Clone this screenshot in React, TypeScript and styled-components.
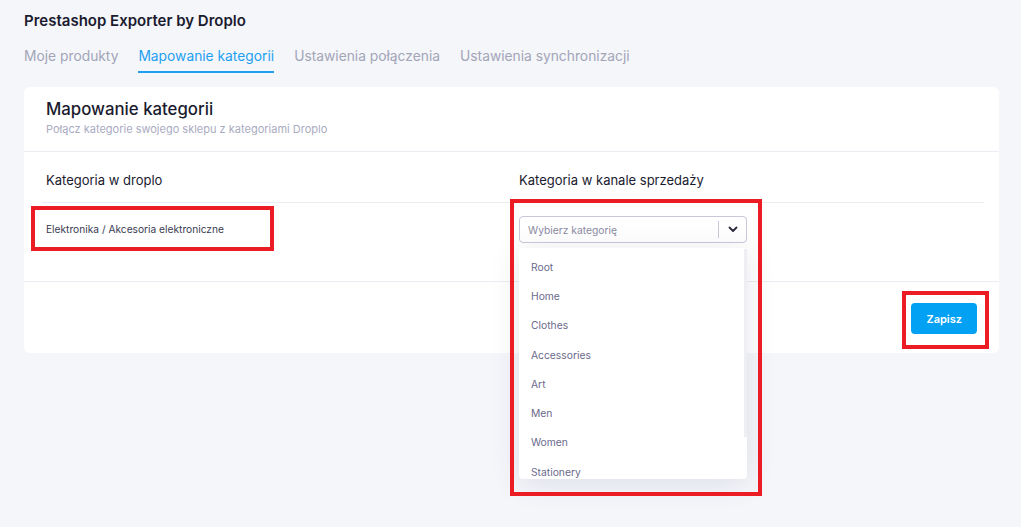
import * as React from "react";
import styled, { createGlobalStyle } from "styled-components";

const GlobalStyle = createGlobalStyle`
  html, body {
    margin: 0;
    padding: 0;
    background: #f4f6fa;
    font-family: "Inter", "Noto Sans", "Liberation Sans", sans-serif;
  }
  * {
    box-sizing: border-box;
  }
`;

const Page = styled.div`
  min-height: 527px;
  padding: 11px 22px 0 24px;
`;

const AppTitle = styled.h1`
  margin: 0;
  font-size: 15px;
  font-weight: 600;
  line-height: 20px;
  color: #1b1b2f;
`;

const Tabs = styled.nav`
  display: flex;
  gap: 20px;
  margin-top: 15px;
`;

const Tab = styled.div<{ $active?: boolean }>`
  padding-bottom: 5px;
  font-size: 13.8px;
  line-height: 20px;
  color: ${p => (p.$active ? "#1f9ff0" : "#a3a5b7")};
  border-bottom: 2px solid ${p => (p.$active ? "#1f9ff0" : "transparent")};
`;

const Card = styled.section`
  margin-top: 14px;
  background: #fff;
  border-radius: 6px;
`;

const CardHeader = styled.div`
  padding: 12px 22px 0;
  height: 65px;
  border-bottom: 1px solid #ececf2;
`;

const CardTitle = styled.h2`
  margin: 0;
  font-size: 16.8px;
  font-weight: 500;
  line-height: 20px;
  color: #1b1b2f;
`;

const CardSubtitle = styled.div`
  margin-top: 3px;
  font-size: 11px;
  line-height: 14px;
  color: #a9abbf;
`;

const Table = styled.div`
  padding: 0 15px 0 18px;
`;

const Row = styled.div<{ $head?: boolean }>`
  display: grid;
  grid-template-columns: 473px 1fr;
  height: ${p => (p.$head ? "51px" : "78px")};
  align-items: ${p => (p.$head ? "center" : "start")};
  border-bottom: ${p => (p.$head ? "1px solid #ececf2" : "none")};
`;

const HeadCell = styled.div`
  padding: 5px 4px 0;
  font-size: 13px;
  color: #1b1b2f;
`;

const Cell = styled.div`
  position: relative;
  padding: 19px 4px 0;
  font-size: 10.2px;
  line-height: 14px;
  color: #3a3a52;
`;

const SelectCell = styled.div`
  padding: 13px 4px 0;
`;

const SelectWrap = styled.div`
  position: relative;
  width: 228px;
`;

const SelectBox = styled.div`
  display: flex;
  align-items: center;
  height: 27px;
  border: 1px solid #c9c7d8;
  border-radius: 4px;
  background: #fff;
`;

const Placeholder = styled.span`
  flex: 1;
  padding-left: 8px;
  font-size: 10.3px;
  color: #8d8ca3;
`;

const Separator = styled.span`
  width: 1px;
  height: 17px;
  background: #c9c7d8;
`;

const Chevron = styled.span`
  display: flex;
  align-items: center;
  justify-content: center;
  width: 27px;
  color: #2a2a3a;
`;

const Menu = styled.div`
  position: absolute;
  top: 32px;
  left: 0;
  width: 228px;
  height: 231px;
  padding-top: 3px;
  overflow: hidden;
  background: #fff;
  border-radius: 4px;
  box-shadow: 0 4px 30px rgba(60, 60, 100, 0.12);
  z-index: 2;
`;

const ScrollThumb = styled.div`
  position: absolute;
  top: 1px;
  right: 0;
  width: 3px;
  height: 188px;
  background: #eeeef3;
`;

const MenuItem = styled.div`
  height: 29.3px;
  padding: 2px 12px 0;
  display: flex;
  align-items: center;
  font-size: 10.3px;
  color: #6b6a8c;
`;

const Footer = styled.div`
  display: flex;
  justify-content: flex-end;
  height: 72px;
  padding: 21px 22px 0;
  border-top: 1px solid #ececf2;
`;

const ButtonWrap = styled.div`
  position: relative;
`;

const SaveButton = styled.button`
  height: 31px;
  padding: 0 15px;
  border: none;
  border-radius: 4px;
  background: #03a1f4;
  color: #fff;
  font-family: inherit;
  font-size: 11px;
  font-weight: 600;
`;

const Highlight = styled.div<{ $t: number; $l: number; $w: number; $h: number }>`
  position: absolute;
  top: ${p => p.$t}px;
  left: ${p => p.$l}px;
  width: ${p => p.$w}px;
  height: ${p => p.$h}px;
  border: 4px solid #ec1c24;
  pointer-events: none;
  z-index: 5;
`;

const categories = ["Root", "Home", "Clothes", "Accessories", "Art", "Men", "Women", "Stationery"];

const App: React.FC = () => {
  return (
    <>
      <GlobalStyle />
      <Page>
        <AppTitle>Prestashop Exporter by Droplo</AppTitle>
        <Tabs>
          <Tab>Moje produkty</Tab>
          <Tab $active>Mapowanie kategorii</Tab>
          <Tab>Ustawienia połączenia</Tab>
          <Tab>Ustawienia synchronizacji</Tab>
        </Tabs>
        <Card>
          <CardHeader>
            <CardTitle>Mapowanie kategorii</CardTitle>
            <CardSubtitle>Połącz kategorie swojego sklepu z kategoriami Droplo</CardSubtitle>
          </CardHeader>
          <Table>
            <Row $head>
              <HeadCell>Kategoria w droplo</HeadCell>
              <HeadCell>Kategoria w kanale sprzedaży</HeadCell>
            </Row>
            <Row>
              <Cell>
                Elektronika / Akcesoria elektroniczne
                <Highlight $t={3} $l={-11} $w={243} $h={45} />
              </Cell>
              <SelectCell>
                <SelectWrap>
                  <SelectBox>
                    <Placeholder>Wybierz kategorię</Placeholder>
                    <Separator />
                    <Chevron>
                      <svg width="10" height="7" viewBox="0 0 10 7">
                        <path d="M1.5 1.5 L5 5 L8.5 1.5" fill="none" stroke="currentColor" strokeWidth="1.8" strokeLinecap="round" strokeLinejoin="round" />
                      </svg>
                    </Chevron>
                  </SelectBox>
                  <Menu>
                    {categories.map((c, i) => (
                      <MenuItem key={i}>{c}</MenuItem>
                    ))}
                    <ScrollThumb />
                  </Menu>
                  <Highlight $t={-17} $l={-9} $w={252} $h={297} />
                </SelectWrap>
              </SelectCell>
            </Row>
          </Table>
          <Footer>
            <ButtonWrap>
              <SaveButton>Zapisz</SaveButton>
              <Highlight $t={-12} $l={-9} $w={87} $h={58} />
            </ButtonWrap>
          </Footer>
        </Card>
      </Page>
    </>
  );
};

export default App;
